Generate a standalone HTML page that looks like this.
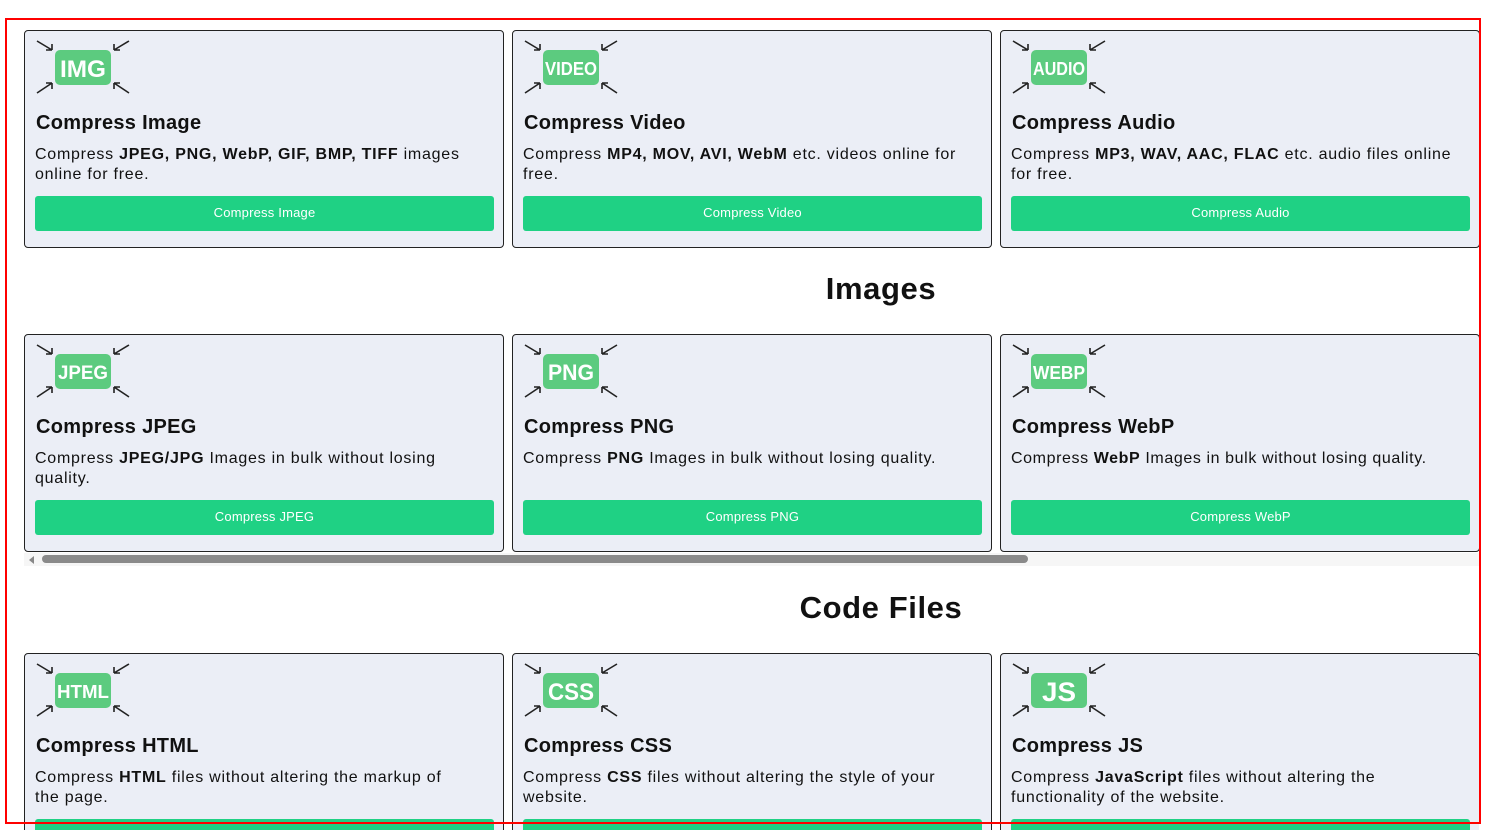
<!DOCTYPE html>
<html><head><meta charset="utf-8"><style>
html,body{margin:0;padding:0;background:#fff;width:1485px;height:830px;overflow:hidden;font-family:"Liberation Sans",sans-serif;color:#111}
.frame{position:absolute;left:5px;top:18px;width:1472px;height:802px;border:2.5px solid #f00;pointer-events:none;z-index:5}
.clip{position:absolute;left:0;top:0;width:1479px;height:830px;overflow:hidden}
.card{position:absolute;width:480px;height:218px;border:1px solid #222;border-radius:4px;background:#ebeef6;box-sizing:border-box}
.icon{position:absolute;left:10px;top:6px;width:98px;height:60px}
.t{position:absolute;left:11px;top:81px;font-size:20px;font-weight:bold;letter-spacing:0.3px}
.d{position:absolute;left:10px;top:114px;width:445px;font-size:16px;line-height:20px;letter-spacing:0.75px}
.b{position:absolute;left:10px;top:165px;width:459px;height:35px;background:#1fd184;border-radius:3px;color:#fff;font-size:13px;text-align:center;line-height:34px;letter-spacing:0.2px}
h2{position:absolute;margin:0;font-size:31px;font-weight:bold;text-align:center;width:400px;left:681px;letter-spacing:0.6px}
.sb{position:absolute;left:24px;top:553px;width:1455px;height:13px;background:#f6f6f6}
.sb i{position:absolute;left:18px;top:2px;width:986px;height:8px;background:#8a8a8a;border-radius:4px}
.sb b{position:absolute;left:5px;top:3px;border-right:5px solid #888;border-top:4px solid transparent;border-bottom:4px solid transparent}
.icon text{font-family:"Liberation Sans";font-weight:bold;fill:#fff}
</style></head><body>
<div class="clip">
<svg width="0" height="0" style="position:absolute"><defs>
<g id="arr" stroke="#222" stroke-width="1.6" fill="none">
<path d="M2 4L17 13M17 13L11 13M17 13L17 7"/>
<path d="M94 4L79 13M79 13L85 13M79 13L79 7"/>
<path d="M2 56L17 46M17 46L11 46M17 46L17 52"/>
<path d="M94 56L79 46M79 46L85 46M79 46L79 52"/>
</g></defs></svg>
<div class="card" style="left:24px;top:30px"><svg class="icon"><use href="#arr"/><rect x="20" y="13" width="56" height="35" rx="5" fill="#5ccb7f"/><text x="25" y="40" font-size="24" textLength="46" lengthAdjust="spacingAndGlyphs">IMG</text></svg><div class="t">Compress Image</div><div class="d">Compress <b>JPEG, PNG, WebP, GIF, BMP, TIFF</b> images online for free.</div><div class="b">Compress Image</div></div>
<div class="card" style="left:512px;top:30px"><svg class="icon"><use href="#arr"/><rect x="20" y="13" width="56" height="35" rx="5" fill="#5ccb7f"/><text x="22" y="38" font-size="18" textLength="52" lengthAdjust="spacingAndGlyphs">VIDEO</text></svg><div class="t">Compress Video</div><div class="d">Compress <b>MP4, MOV, AVI, WebM</b> etc. videos online for free.</div><div class="b">Compress Video</div></div>
<div class="card" style="left:1000px;top:30px"><svg class="icon"><use href="#arr"/><rect x="20" y="13" width="56" height="35" rx="5" fill="#5ccb7f"/><text x="22" y="38" font-size="18" textLength="52" lengthAdjust="spacingAndGlyphs">AUDIO</text></svg><div class="t">Compress Audio</div><div class="d">Compress <b>MP3, WAV, AAC, FLAC</b> etc. audio files online for free.</div><div class="b">Compress Audio</div></div>
<h2 style="top:271px">Images</h2>
<div class="card" style="left:24px;top:334px"><svg class="icon"><use href="#arr"/><rect x="20" y="13" width="56" height="35" rx="5" fill="#5ccb7f"/><text x="23" y="38" font-size="19" textLength="50" lengthAdjust="spacingAndGlyphs">JPEG</text></svg><div class="t">Compress JPEG</div><div class="d">Compress <b>JPEG/JPG</b> Images in bulk without losing quality.</div><div class="b">Compress JPEG</div></div>
<div class="card" style="left:512px;top:334px"><svg class="icon"><use href="#arr"/><rect x="20" y="13" width="56" height="35" rx="5" fill="#5ccb7f"/><text x="25" y="39" font-size="22" textLength="46" lengthAdjust="spacingAndGlyphs">PNG</text></svg><div class="t">Compress PNG</div><div class="d">Compress <b>PNG</b> Images in bulk without losing quality.</div><div class="b">Compress PNG</div></div>
<div class="card" style="left:1000px;top:334px"><svg class="icon"><use href="#arr"/><rect x="20" y="13" width="56" height="35" rx="5" fill="#5ccb7f"/><text x="22" y="38" font-size="18" textLength="52" lengthAdjust="spacingAndGlyphs">WEBP</text></svg><div class="t">Compress WebP</div><div class="d" style="letter-spacing:0.6px">Compress <b>WebP</b> Images in bulk without losing quality.</div><div class="b">Compress WebP</div></div>
<div class="sb"><b></b><i></i></div>
<h2 style="top:590px">Code Files</h2>
<div class="card" style="left:24px;top:653px"><svg class="icon"><use href="#arr"/><rect x="20" y="13" width="56" height="35" rx="5" fill="#5ccb7f"/><text x="22" y="38" font-size="18" textLength="52" lengthAdjust="spacingAndGlyphs">HTML</text></svg><div class="t">Compress HTML</div><div class="d">Compress <b>HTML</b> files without altering the markup of<br>the page.</div><div class="b">Compress HTML</div></div>
<div class="card" style="left:512px;top:653px"><svg class="icon"><use href="#arr"/><rect x="20" y="13" width="56" height="35" rx="5" fill="#5ccb7f"/><text x="25" y="40" font-size="24" textLength="46" lengthAdjust="spacingAndGlyphs">CSS</text></svg><div class="t">Compress CSS</div><div class="d">Compress <b>CSS</b> files without altering the style of your website.</div><div class="b">Compress CSS</div></div>
<div class="card" style="left:1000px;top:653px"><svg class="icon"><use href="#arr"/><rect x="20" y="13" width="56" height="35" rx="5" fill="#5ccb7f"/><text x="31" y="41" font-size="27" textLength="34" lengthAdjust="spacingAndGlyphs">JS</text></svg><div class="t">Compress JS</div><div class="d">Compress <b>JavaScript</b> files without altering the functionality of the website.</div><div class="b">Compress JS</div></div>
</div>
<div class="frame"></div>
</body></html>
